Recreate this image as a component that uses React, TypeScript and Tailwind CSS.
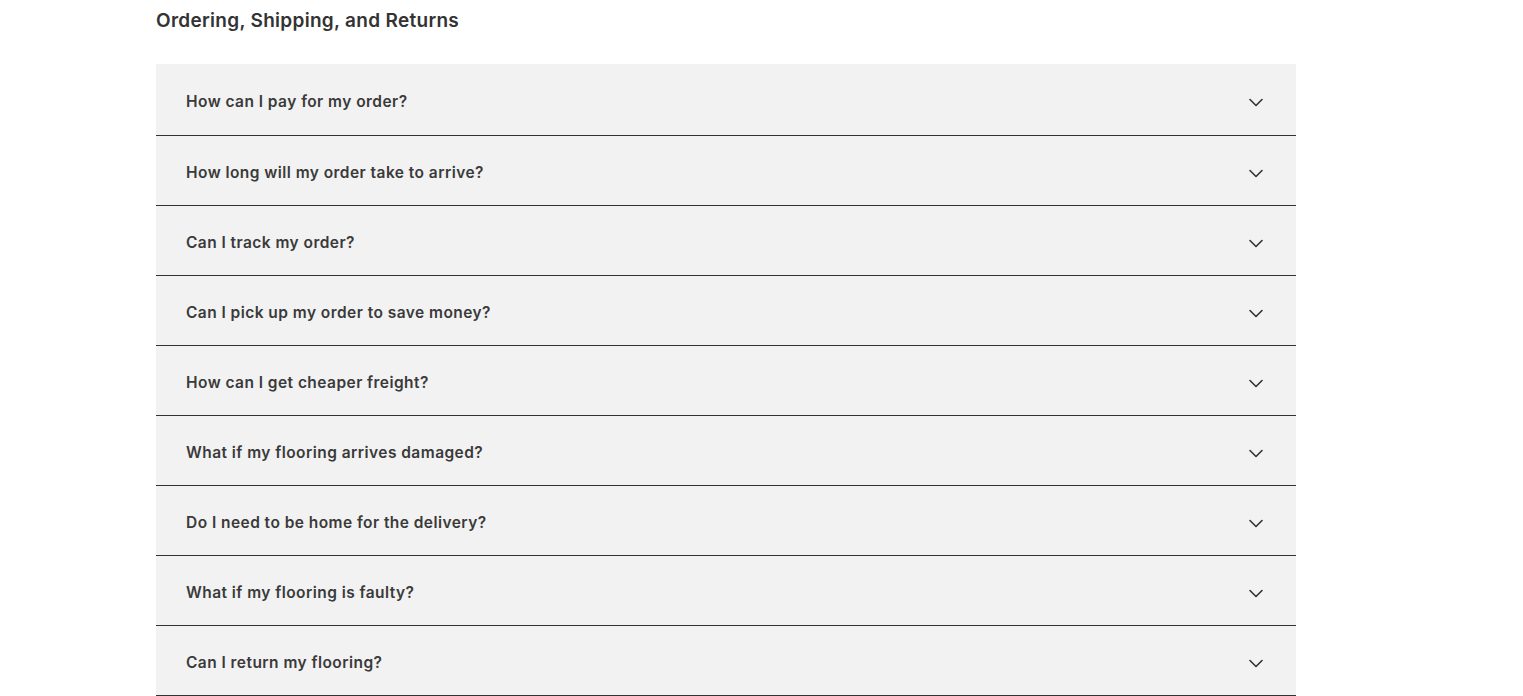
const questions = [
  "How can I pay for my order?",
  "How long will my order take to arrive?",
  "Can I track my order?",
  "Can I pick up my order to save money?",
  "How can I get cheaper freight?",
  "What if my flooring arrives damaged?",
  "Do I need to be home for the delivery?",
  "What if my flooring is faulty?",
  "Can I return my flooring?",
];

function Chevron() {
  return (
    <svg width="14" height="9" viewBox="0 0 14 9" fill="none" className="translate-y-[1px]">
      <path d="M1 1.5L7 7.5L13 1.5" stroke="#333" strokeWidth="1.6" strokeLinecap="round" strokeLinejoin="round" />
    </svg>
  );
}

export default function App() {
  return (
    <div className="min-h-screen bg-white font-['Inter',sans-serif] text-[#333]">
      <div className="ml-[156px] w-[1140px]">
        <h2 className="pt-[8px] text-[19px] font-semibold leading-[26px] tracking-[0.3px] text-[#333]">
          Ordering, Shipping, and Returns
        </h2>
        <div className="mt-[30px]">
          {questions.map((q, i) => (
            <button
              key={q}
              className={[
                "flex w-full items-center justify-between border-b border-[#333] bg-[#f2f2f2] pl-[30px] pr-[33px] pt-[4px] text-left",
                i === 0 ? "h-[72px]" : "h-[70px]",
              ].join(" ")}
            >
              <span className="text-[15.5px] font-semibold tracking-[0.45px] text-[#3a3a3a]">{q}</span>
              <Chevron />
            </button>
          ))}
        </div>
      </div>
    </div>
  );
}
